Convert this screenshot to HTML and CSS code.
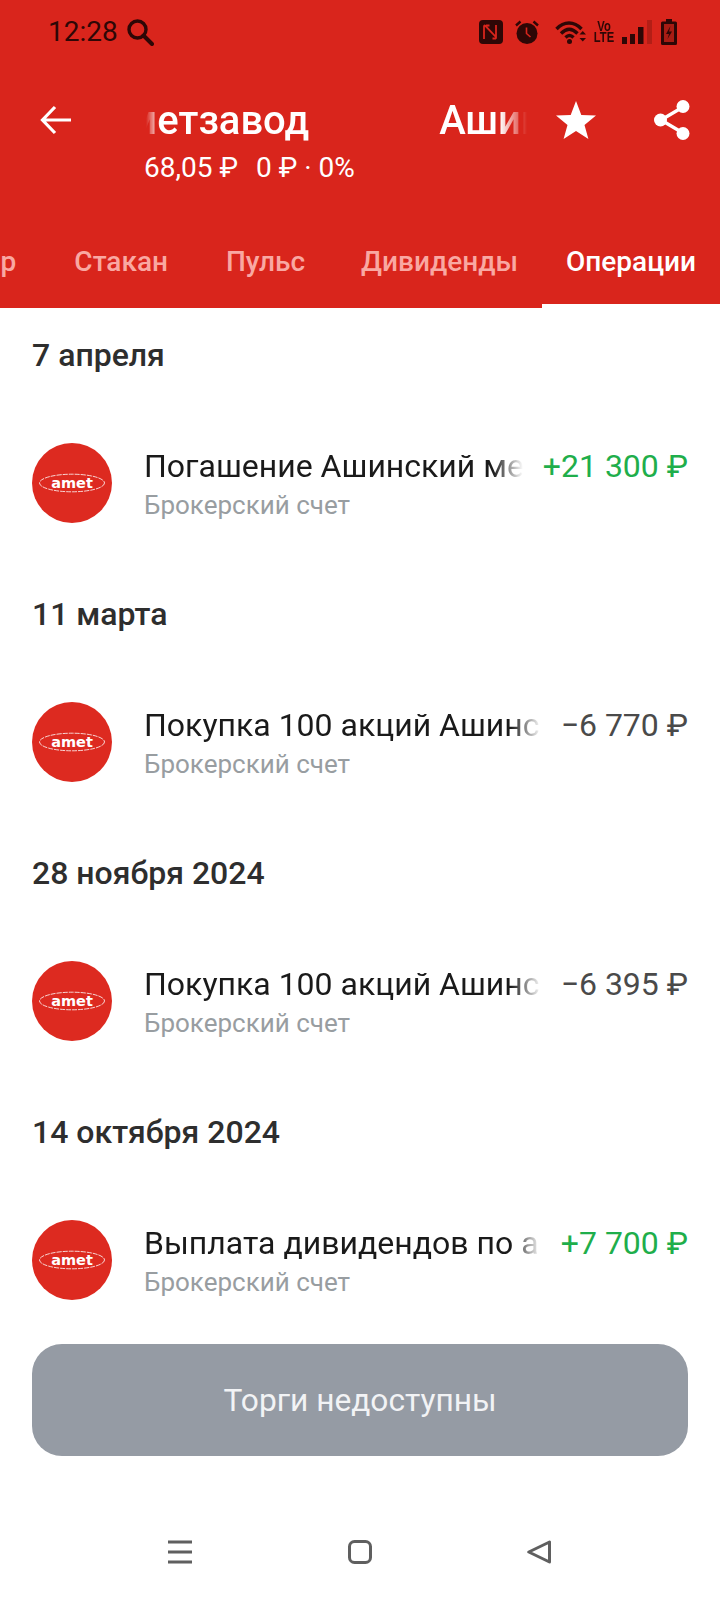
FILE: index.html
```html
<!DOCTYPE html>
<html lang="ru">
<head>
<meta charset="utf-8">
<title>Операции</title>
<link rel="stylesheet" href="styles.css">
</head>
<body>
<div class="screen">
  <header class="header">
    <div class="status">
      <div class="status-left">
        <span class="time">12:28</span>
        <svg class="i-search" viewBox="0 0 28 28"><circle cx="11.5" cy="11.5" r="8.5" fill="none" stroke="currentColor" stroke-width="3.4"/><path d="M17.5 17.5L26 26" stroke="currentColor" stroke-width="4" stroke-linecap="round"/></svg>
      </div>
      <div class="status-right">
        <svg class="i-nfc" viewBox="0 0 24 24"><rect width="24" height="24" rx="4" fill="currentColor"/><path d="M5 19V6.5q0-1.5 1.3-.7L17 17V5M7 5.5h3.5M17 18.5h-3.5" fill="none" stroke="#d9251c" stroke-width="1.8"/></svg>
        <svg class="i-alarm" viewBox="0 0 24 24"><circle cx="12" cy="13.5" r="10.5" fill="currentColor"/><path d="M1 5.5L5.5 1.5M23 5.5L18.500 1.500" stroke="currentColor" stroke-width="2.400" fill="none"/><path d="M11.500 7.500V13.500L15.500 17" stroke="#d9251c" stroke-width="1.600" fill="none"/></svg>
        <svg class="i-wifi" viewBox="0 0 31 24"><path d="M1.500 9C9 1 19 1 26.500 9M6 13.500C11.500 8 17 8 22.500 13.500M10.500 17.500C13 15 16 15 18.500 17.500" fill="none" stroke="currentColor" stroke-width="3.400"/><circle cx="14.500" cy="21.500" r="2.500" fill="currentColor"/><path d="M24.500 14.500h6.500l-3.250-3.500zM24.500 18h6.500l-3.250 3.500z" fill="currentColor"/></svg>
        <span class="volte"><span>Vo</span><span>LTE</span></span>
        <svg class="i-signal" viewBox="0 0 30 24"><rect x="0" y="17" width="5" height="7" fill="currentColor"/><rect x="8" y="14" width="5" height="10" fill="currentColor"/><rect x="16" y="7" width="5.500" height="17" fill="currentColor"/><rect x="25" y="0" width="5" height="24" fill="currentColor" opacity=".22"/></svg>
        <svg class="i-batt" viewBox="0 0 16 26"><path d="M5 0h6v2.500h3.500q1.500 0 1.500 1.500v20.500q0 1.500-1.500 1.500h-13q-1.500 0-1.500-1.500V4q0-1.500 1.500-1.500H5z" fill="currentColor"/><rect x="3" y="5" width="10" height="18" fill="#a81c14"/><path d="M9.500 7L5 15h3l-1.500 5L11 12.500H8z" fill="currentColor"/></svg>
      </div>
    </div>
    <div class="toolbar">
      <svg class="i-back" viewBox="0 0 32 32"><path d="M31 16H3M15 3L2.500 16L15 29" fill="none" stroke="#fff" stroke-width="3.200"/></svg>
      <div class="heading">
        <div class="marquee"><div class="marquee-track"><span>Ашинский метзавод</span><span>Ашинский метзавод</span></div></div>
        <div class="quote"><span>68,05 ₽</span><span>0 ₽ · 0%</span></div>
      </div>
      <svg class="i-star" viewBox="0 0 40 38"><path d="M20 0l5.300 13.900L40 14.600 28.500 23.900 32.400 38 20 29.900 7.600 38l3.900-14.100L0 14.600l14.700-.7z" fill="#fff"/></svg>
      <svg class="i-share" viewBox="0 0 36 40"><path d="M29 7L7 20l22 13" fill="none" stroke="#fff" stroke-width="3.400"/><circle cx="29" cy="6.500" r="6.500" fill="#fff"/><circle cx="6.500" cy="20" r="6.500" fill="#fff"/><circle cx="29" cy="33.500" r="6.500" fill="#fff"/></svg>
    </div>
    <nav class="tabs">
      <a class="tab">Обзор</a>
      <a class="tab">Стакан</a>
      <a class="tab">Пульс</a>
      <a class="tab tab-tight">Дивиденды</a>
      <a class="tab tab-active">Операции</a>
    </nav>
  </header>

  <main class="feed">
    <section class="group">
      <h2 class="date">7 апреля</h2>
      <div class="row">
        <svg class="logo" viewBox="0 0 80 80"><circle cx="40" cy="40" r="40" fill="#dd2a20"/><ellipse cx="40" cy="40" rx="32.500" ry="8.800" fill="none" stroke="#fff" stroke-width=".8" stroke-dasharray="5 1"/><text x="40" y="45" class="logo-text" text-anchor="middle">amet</text></svg>
        <div class="info"><div class="name">Погашение Ашинский металлургический завод</div><div class="account">Брокерский счет</div></div>
        <div class="amount plus">+21 300 ₽</div>
      </div>
    </section>
    <section class="group">
      <h2 class="date">11 марта</h2>
      <div class="row">
        <svg class="logo" viewBox="0 0 80 80"><circle cx="40" cy="40" r="40" fill="#dd2a20"/><ellipse cx="40" cy="40" rx="32.500" ry="8.800" fill="none" stroke="#fff" stroke-width=".8" stroke-dasharray="5 1"/><text x="40" y="45" class="logo-text" text-anchor="middle">amet</text></svg>
        <div class="info"><div class="name">Покупка 100 акций Ашинский метзавод</div><div class="account">Брокерский счет</div></div>
        <div class="amount">−6 770 ₽</div>
      </div>
    </section>
    <section class="group">
      <h2 class="date">28 ноября 2024</h2>
      <div class="row">
        <svg class="logo" viewBox="0 0 80 80"><circle cx="40" cy="40" r="40" fill="#dd2a20"/><ellipse cx="40" cy="40" rx="32.500" ry="8.800" fill="none" stroke="#fff" stroke-width=".8" stroke-dasharray="5 1"/><text x="40" y="45" class="logo-text" text-anchor="middle">amet</text></svg>
        <div class="info"><div class="name">Покупка 100 акций Ашинский метзавод</div><div class="account">Брокерский счет</div></div>
        <div class="amount">−6 395 ₽</div>
      </div>
    </section>
    <section class="group">
      <h2 class="date">14 октября 2024</h2>
      <div class="row">
        <svg class="logo" viewBox="0 0 80 80"><circle cx="40" cy="40" r="40" fill="#dd2a20"/><ellipse cx="40" cy="40" rx="32.500" ry="8.800" fill="none" stroke="#fff" stroke-width=".8" stroke-dasharray="5 1"/><text x="40" y="45" class="logo-text" text-anchor="middle">amet</text></svg>
        <div class="info"><div class="name">Выплата дивидендов по акциям Ашинский</div><div class="account">Брокерский счет</div></div>
        <div class="amount plus">+7 700 ₽</div>
      </div>
    </section>
  </main>

  <div class="action"><button class="trade">Торги недоступны</button></div>

  <footer class="navbar">
    <svg class="nav-icon" viewBox="0 0 24 24"><path d="M0 2h24M0 12h24M0 22h24" stroke="#5f5f5f" stroke-width="3" fill="none"/></svg>
    <svg class="nav-icon" viewBox="0 0 24 24"><rect x="1.500" y="1.500" width="21" height="21" rx="5" stroke="#5f5f5f" stroke-width="3" fill="none"/></svg>
    <svg class="nav-icon" viewBox="0 0 24 24"><path d="M22.500 2v20L1.800 12z" stroke="#5f5f5f" stroke-width="3" stroke-linejoin="round" fill="none"/></svg>
  </footer>
</div>
</body>
</html>
```

FILE: styles.css
```css
* { box-sizing: border-box; }
html, body { margin: 0; padding: 0; }
body { background: #fff; font-family: Roboto, "Noto Sans", sans-serif; }
.screen { width: 720px; height: 1600px; display: flex; flex-direction: column; overflow: hidden; }

.header { background: #d9251c; height: 308px; color: #fff; }
.status { height: 64px; display: flex; justify-content: space-between; align-items: center; padding: 0 43px 0 48px; color: #2e0706; }
.status-left { display: flex; align-items: center; gap: 8px; }
.time { font-size: 28px; line-height: 32px; }
.i-search { width: 28px; height: 28px; }
.status-right { display: flex; align-items: center; }
.i-nfc { width: 24px; height: 24px; }
.i-alarm { width: 24px; height: 24px; margin-left: 12px; }
.i-wifi { width: 31px; height: 24px; margin-left: 16px; }
.volte { display: flex; flex-direction: column; align-items: center; width: 16px; margin-left: 10px; font-size: 14px; line-height: 11.5px; font-weight: 700; font-family: "Liberation Sans", sans-serif; transform: scaleX(.8); }
.i-signal { width: 30px; height: 24px; margin-left: 10px; }
.i-batt { width: 16px; height: 26px; margin-left: 9px; }

.toolbar { height: 166px; padding: 35px 30px 0 40px; display: flex; align-items: flex-start; }
.i-back { width: 32px; height: 32px; margin-top: 5px; }
.heading { width: 383px; margin-left: 72px; min-width: 0; }
.marquee { overflow: hidden; height: 44px; -webkit-mask-image: linear-gradient(90deg, transparent 0, transparent 2px, #000 16px, #000 356px, transparent 383px); mask-image: linear-gradient(90deg, transparent 0, transparent 2px, #000 16px, #000 356px, transparent 383px); }
.marquee-track { display: flex; gap: 130px; margin-left: -220px; font-size: 40px; line-height: 44px; font-weight: 500; white-space: nowrap; }
.quote { display: flex; gap: 18px; margin-top: 7px; font-size: 28px; line-height: 36px; }
.i-star { width: 40px; height: 38px; margin-left: 29px; margin-top: 2px; }
.i-share { width: 36px; height: 40px; margin-left: 58px; margin-top: 1px; }

.tabs { height: 78px; display: flex; justify-content: flex-end; overflow: hidden; }
.tab { flex: none; padding: 0 29px; height: 74px; margin-bottom: 4px; font-size: 28px; line-height: 64px; font-weight: 500; color: #f9a8a2; }
.tab-tight { padding: 0 24px 0 27px; }
.tab-active { padding: 0 24px; color: #fff; height: 78px; border-bottom: 4px solid #fff; margin-bottom: 0; }

.feed { height: 1036px; overflow: hidden; }
.group { height: 259px; padding: 0 32px; }
.date { margin: 0; padding-top: 29px; font-size: 32px; line-height: 36px; font-weight: 500; color: #2e2e2e; }
.row { display: flex; align-items: center; margin-top: 70px; height: 80px; }
.logo { width: 80px; height: 80px; flex: none; }
.logo-text { font-family: "DejaVu Sans", sans-serif; font-size: 14.5px; font-weight: 700; fill: #fff; }
.info { flex: 1; min-width: 0; margin: 2px 20px 0 32px; }
.name { font-size: 32px; line-height: 38px; color: #1a1a1a; white-space: nowrap; overflow: hidden; -webkit-mask-image: linear-gradient(90deg, #000 calc(100% - 30px), transparent 100%); mask-image: linear-gradient(90deg, #000 calc(100% - 30px), transparent 100%); }
.account { font-size: 26px; line-height: 34px; margin-top: 3px; color: #989da1; }
.amount { flex: none; align-self: flex-start; margin-top: 4px; font-size: 32px; line-height: 38px; color: #4a4a4a; }
.plus { color: #1fae4b; }

.action { padding: 0 32px; }
.trade { display: block; width: 100%; height: 112px; border: 0; border-radius: 30px; background: #959ba4; color: #f2f3f5; font-family: Roboto, sans-serif; font-size: 31.7px; padding: 1px 0 0; }

.navbar { flex: 1; display: flex; align-items: center; justify-content: space-between; padding: 48px 169px 0 168px; }
.nav-icon { width: 24px; height: 24px; }
```
